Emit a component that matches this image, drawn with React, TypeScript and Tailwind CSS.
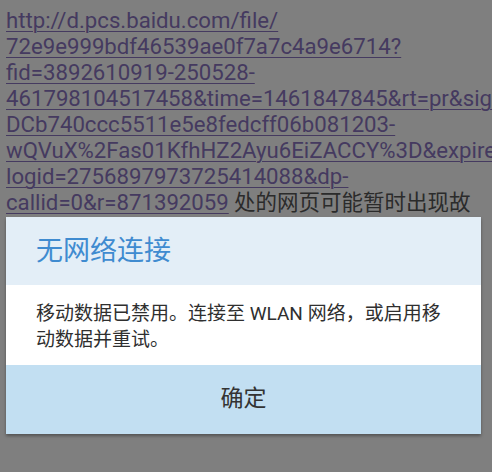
const link = [
  'http://d.pcs.baidu.com/file/',
  '72e9e999bdf46539ae0f7a7c4a9e6714?',
  'fid=3892610919-250528-',
  '461798104517458&time=1461847845&rt=pr&sign=FDtAER',
  'DCb740ccc5511e5e8fedcff06b081203-',
  'wQVuX%2Fas01KfhHZ2Ayu6EiZACCY%3D&expires=8h&chkv=1&',
  'logid=2756897973725414088&dp-',
];

export default function App() {
  return (
    <div className="relative h-[472px] w-[492px] overflow-hidden bg-[#7f7f7f] font-['Roboto','Noto_Sans_CJK_SC',sans-serif]">
      {/* page behind the dim overlay; long unbreakable lines run off the right edge */}
      <div className="pt-[7px] pl-[6px] text-[22.2px] leading-[26px] text-[#453a60]">
        {link.map((l) => (
          <div key={l} className="whitespace-nowrap">
            <span className="underline decoration-1 underline-offset-[3px]">{l}</span>
          </div>
        ))}
        <div className="whitespace-nowrap">
          <span className="underline decoration-1 underline-offset-[3px]">callid=0&amp;r=871392059</span>
          <span className="text-[21.5px] text-[#2b2b2b]"> 处的网页可能暂时出现故</span>
        </div>
      </div>

      {/* dialog */}
      <div className="absolute left-[6px] top-[217px] w-[475px] shadow-[0_2px_3px_rgba(0,0,0,0.35)]">
        <div className="flex h-[68px] items-center bg-[#e3eef7] pl-[30px] text-[27px] text-[#3f8bd0]">
          无网络连接
        </div>
        <div className="h-[80px] bg-white pl-[30px] pt-[16px] text-[19px] leading-[26px] text-[#2f2f2f]">
          移动数据已禁用。连接至 WLAN 网络，或启用移
          <br />
          动数据并重试。
        </div>
        <div className="flex h-[69px] items-center justify-center bg-[#c2dff2] text-[23px] text-[#333]">
          确定
        </div>
      </div>
    </div>
  );
}
